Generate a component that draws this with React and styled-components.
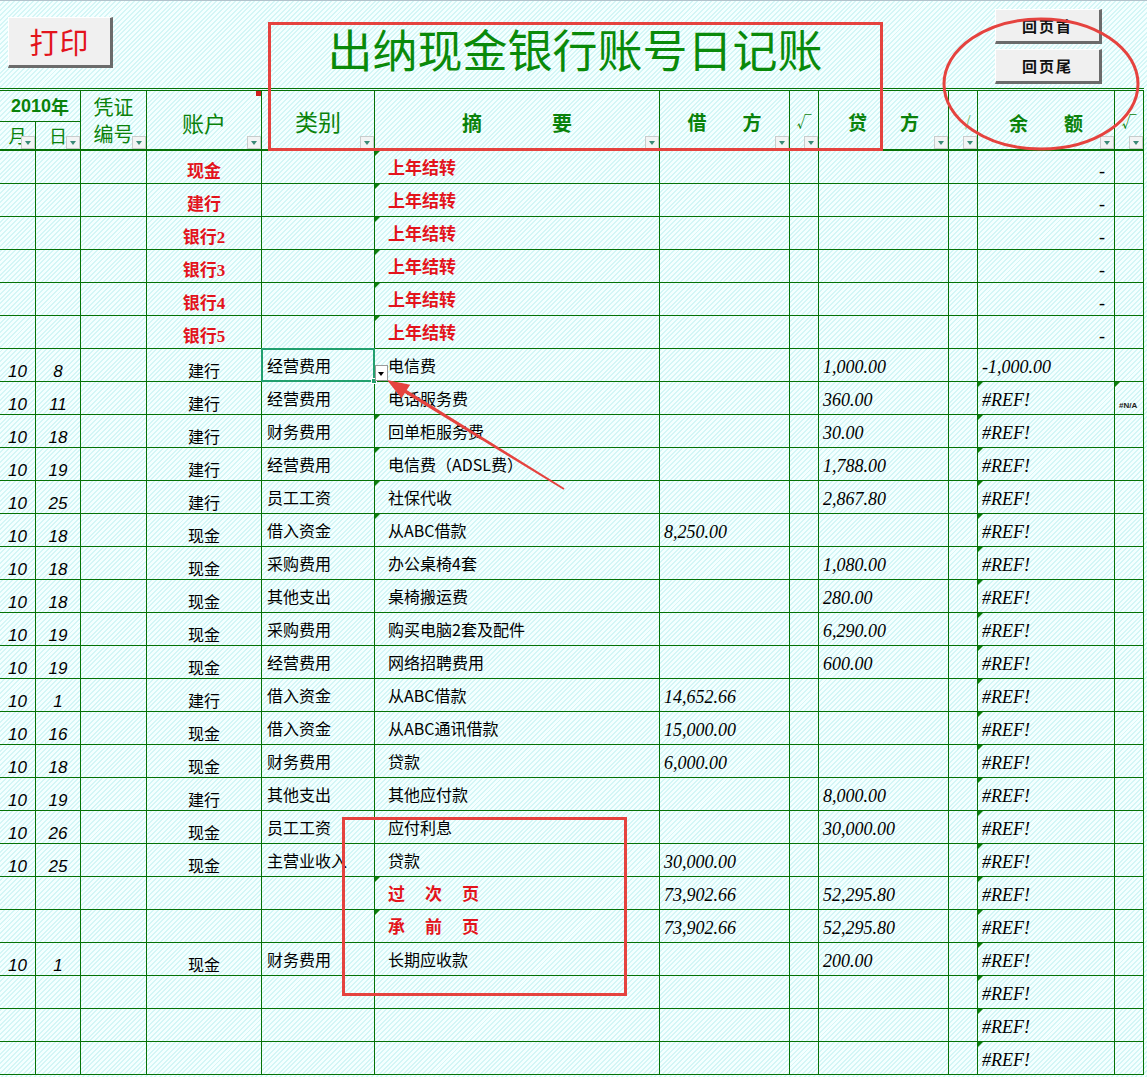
import React from 'react';
import styled, { createGlobalStyle, css } from 'styled-components';

const LINE = '#067206';
const HEAD = '#0a820a';
const RED = '#e3141c';
const CJK = '"Noto Sans CJK SC", "Noto Sans", sans-serif';
const SERIF = '"Liberation Serif", "Noto Sans CJK SC", serif';
const SANS = '"Liberation Sans", "Noto Sans CJK SC", sans-serif';
const COLS = '36px 45px 66px 115px 113px 285px 130px 29px 130px 29px 137px 29px';

const Global = createGlobalStyle`
  *, *::before, *::after { box-sizing: border-box; }
  html, body { margin: 0; padding: 0; background: #e6fcfc; }
  body { font-family: ${CJK}; }
`;

const Page = styled.div`
  position: relative;
  width: 1147px;
  height: 1077px;
  overflow: hidden;
  background: repeating-linear-gradient(135deg, #d4f6f6 0 1.4px, #f4ffff 1.4px 3.4px);
`;

const TopBar = styled.div`
  display: grid;
  grid-template-columns: 268px 614px 1fr;
  height: 88px;
  border-top: 1px solid #b2c3cc;
`;

const PrintButton = styled.button`
  align-self: start;
  margin: 16px 0 0 8px;
  width: 105px;
  height: 51px;
  padding: 0;
  background: #f0f0f0;
  border: none;
  border-top: 1px solid #ffffff;
  border-left: 1px solid #ffffff;
  border-right: 3px solid #6b6b6b;
  border-bottom: 3px solid #6b6b6b;
  color: ${RED};
  font-family: ${CJK};
  font-size: 29px;
  line-height: 1;
  letter-spacing: 1px;
`;

const Title = styled.h1`
  margin: 20px 0 0;
  align-self: start;
  text-align: center;
  font-family: ${CJK};
  font-weight: 400;
  font-size: 45px;
  line-height: 56px;
  color: #0a8a0a;
`;

const NavGroup = styled.div`
  display: flex;
  flex-direction: column;
  gap: 5px;
  padding: 8px 0 0 113px;
`;

const NavButton = styled.button`
  width: 107px;
  height: 35px;
  padding: 0;
  background: #f0f0f0;
  border: none;
  border-top: 1px solid #ffffff;
  border-left: 1px solid #ffffff;
  border-right: 3px solid #6b6b6b;
  border-bottom: 3px solid #6b6b6b;
  color: #111;
  font-family: ${CJK};
  font-weight: 700;
  font-size: 15px;
  letter-spacing: 2px;
`;

const Sheet = styled.div`
  width: 1144px;
`;

const Header = styled.div`
  display: grid;
  grid-template-columns: ${COLS};
  grid-template-rows: 31px 27px;
  border-top: 3px double ${LINE};
  border-bottom: 2px solid ${LINE};
`;

const HeadCell = styled.div`
  position: relative;
  grid-column: ${p => p.$col};
  grid-row: ${p => p.$row || '1 / span 2'};
  display: flex;
  flex-direction: ${p => (p.$stack ? 'column' : 'row')};
  align-items: center;
  justify-content: center;
  gap: ${p => p.$gap || 0}px;
  border-right: 1px solid ${LINE};
  border-bottom: ${p => (p.$split ? `1px solid ${LINE}` : 'none')};
  color: ${HEAD};
  font-family: ${CJK};
  font-size: ${p => p.$size || 20}px;
  font-weight: ${p => (p.$bold ? 700 : 400)};
  line-height: ${p => (p.$stack ? '27px' : '1.2')};
  padding-top: ${p => p.$pt || 0}px;
  ${p =>
    p.$comment &&
    css`
      &::before {
        content: '';
        position: absolute;
        top: 0;
        right: 0;
        border-style: solid;
        border-width: 5px 5px 0 0;
        border-color: #d02020 #d02020 transparent transparent;
      }
    `}
`;

const YearNum = styled.span`
  font-family: ${SANS};
  font-weight: 700;
`;

const FaintMark = styled.span`
  color: #7fbf7f;
  margin-left: 10px;
`;

const Filter = styled.span`
  position: absolute;
  right: 0;
  bottom: 0;
  width: 14px;
  height: 13px;
  background: #f2f4f4;
  border: 1px solid #c8cccc;
  &::after {
    content: '';
    position: absolute;
    left: 3px;
    top: 4px;
    border-style: solid;
    border-width: 4px 3.5px 0 3.5px;
    border-color: #3b8a76 transparent transparent transparent;
  }
`;

const Row = styled.div`
  display: grid;
  grid-template-columns: ${COLS};
  height: 33px;
  border-bottom: 1px solid ${LINE};
`;

const Cell = styled.div`
  position: relative;
  display: flex;
  align-items: center;
  min-width: 0;
  white-space: nowrap;
  border-right: 1px solid ${LINE};
  color: #000;
  font-family: ${CJK};
  font-size: 16px;
  line-height: 20px;
  ${p =>
    p.$flag &&
    css`
      &::before {
        content: '';
        position: absolute;
        left: 0;
        top: 0;
        border-style: solid;
        border-width: 5px 5px 0 0;
        border-color: #0d7d0d transparent transparent transparent;
      }
    `}
`;

const DateCell = styled(Cell)`
  justify-content: center;
  align-items: flex-end;
  padding-bottom: 0;
  font-family: ${SANS};
  font-style: italic;
  font-size: 17px;
  line-height: 18px;
`;

const AcctCell = styled(Cell)`
  justify-content: center;
  align-items: flex-end;
  padding-bottom: 1px;
  ${p =>
    p.$red &&
    css`
      color: ${RED};
      font-family: ${SERIF};
      font-weight: 700;
      font-size: 17px;
    `}
`;

const CatCell = styled(Cell)`
  padding-left: 5px;
  ${p =>
    p.$selected &&
    css`
      z-index: 2;
      &::after {
        content: '';
        position: absolute;
        top: -1px;
        left: -1px;
        right: -1px;
        bottom: -1px;
        border: 2px solid #22a06e;
      }
    `}
`;

const FillHandle = styled.span`
  position: absolute;
  right: -3px;
  bottom: -3px;
  width: 6px;
  height: 6px;
  background: #22a06e;
  border: 1px solid #ffffff;
  z-index: 3;
`;

const DropButton = styled.span`
  position: absolute;
  left: calc(100% + 1px);
  top: 16px;
  width: 13px;
  height: 16px;
  background: #ffffff;
  border: 1px solid #9a9a9a;
  z-index: 3;
  &::after {
    content: '';
    position: absolute;
    left: 2px;
    top: 6px;
    border-style: solid;
    border-width: 4px 3.5px 0 3.5px;
    border-color: #000 transparent transparent transparent;
  }
`;

const DescCell = styled(Cell)`
  padding-left: 13px;
  gap: ${p => p.$gap || 0}px;
  ${p =>
    p.$red &&
    css`
      color: ${RED};
      font-weight: 700;
      font-size: 17px;
    `}
`;

const AmountCell = styled(Cell)`
  padding-left: 4px;
  padding-top: 3px;
  font-family: ${SERIF};
  font-style: italic;
  font-size: 18px;
`;

const TickCell = styled(Cell)``;

const BalCell = styled(AmountCell)`
  ${p =>
    p.$dash &&
    css`
      justify-content: flex-end;
      padding-right: 9px;
      padding-top: 8px;
      font-style: normal;
    `}
`;

const LastCell = styled(Cell)`
  align-items: flex-end;
  padding: 0 0 3px 4px;
  font-family: ${SANS};
  font-weight: 700;
  font-size: 8px;
  line-height: 10px;
  color: #222;
`;

const Annotations = styled.svg`
  position: absolute;
  left: 0;
  top: 0;
  pointer-events: none;
`;

const carry = ['现金', '建行', '银行2', '银行3', '银行4', '银行5'].map(a => ({
  acct: a,
  red: true,
  desc: '上年结转',
  descRed: true,
  flagDesc: true,
  dash: true,
}));

const e = (m, d, acct, cat, desc, debit, credit, bal = '#REF!') => ({ m, d, acct, cat, desc, debit, credit, bal });

const entries = [
  { ...e('10', '8', '建行', '经营费用', '电信费', '', '1,000.00', '-1,000.00'), selected: true },
  { ...e('10', '11', '建行', '经营费用', '电话服务费', '', '360.00'), na: true },
  { ...e('10', '18', '建行', '财务费用', '回单柜服务费', '', '30.00'), flagDesc: true },
  { ...e('10', '19', '建行', '经营费用', '电信费（ADSL费）', '', '1,788.00'), flagDesc: true },
  { ...e('10', '25', '建行', '员工工资', '社保代收', '', '2,867.80'), flagDesc: true },
  { ...e('10', '18', '现金', '借入资金', '从ABC借款', '8,250.00', ''), flagDesc: true },
  e('10', '18', '现金', '采购费用', '办公桌椅4套', '', '1,080.00'),
  e('10', '18', '现金', '其他支出', '桌椅搬运费', '', '280.00'),
  e('10', '19', '现金', '采购费用', '购买电脑2套及配件', '', '6,290.00'),
  e('10', '19', '现金', '经营费用', '网络招聘费用', '', '600.00'),
  e('10', '1', '建行', '借入资金', '从ABC借款', '14,652.66', ''),
  e('10', '16', '现金', '借入资金', '从ABC通讯借款', '15,000.00', ''),
  e('10', '18', '现金', '财务费用', '贷款', '6,000.00', ''),
  e('10', '19', '建行', '其他支出', '其他应付款', '', '8,000.00'),
  e('10', '26', '现金', '员工工资', '应付利息', '', '30,000.00'),
  e('10', '25', '现金', '主营业收入', '贷款', '30,000.00', ''),
  { spaced: ['过', '次', '页'], descRed: true, flagDesc: true, debit: '73,902.66', credit: '52,295.80', bal: '#REF!' },
  { spaced: ['承', '前', '页'], descRed: true, flagDesc: true, debit: '73,902.66', credit: '52,295.80', bal: '#REF!' },
  e('10', '1', '现金', '财务费用', '长期应收款', '', '200.00'),
  { bal: '#REF!' },
  { bal: '#REF!' },
  { bal: '#REF!' },
];

const rows = [...carry, ...entries];

function SheetRow({ r }) {
  const balFlag = !!r.bal && r.bal !== '-1,000.00';
  return (
    <Row>
      <DateCell>{r.m}</DateCell>
      <DateCell>{r.d}</DateCell>
      <Cell />
      <AcctCell $red={r.red}>{r.acct}</AcctCell>
      <CatCell $selected={r.selected}>
        {r.cat}
        {r.selected && <FillHandle />}
        {r.selected && <DropButton />}
      </CatCell>
      <DescCell $red={r.descRed} $flag={r.flagDesc} $gap={r.spaced ? 20 : 0}>
        {r.spaced ? r.spaced.map(ch => <span key={ch}>{ch}</span>) : r.desc}
      </DescCell>
      <AmountCell>{r.debit}</AmountCell>
      <TickCell />
      <AmountCell>{r.credit}</AmountCell>
      <TickCell />
      <BalCell $dash={r.dash} $flag={balFlag}>{r.dash ? '-' : r.bal}</BalCell>
      <LastCell $flag={r.na}>{r.na ? '#N/A' : ''}</LastCell>
    </Row>
  );
}

export default function App() {
  return (
    <>
      <Global />
      <Page>
        <TopBar>
          <div>
            <PrintButton>打印</PrintButton>
          </div>
          <Title>出纳现金银行账号日记账</Title>
          <NavGroup>
            <NavButton>回页首</NavButton>
            <NavButton>回页尾</NavButton>
          </NavGroup>
        </TopBar>
        <Sheet>
          <Header>
            <HeadCell $col="1 / span 2" $row="1" $split $size={18} $bold $pt={2}>
              <YearNum>2010</YearNum>年
            </HeadCell>
            <HeadCell $col="1" $row="2" $size={18}>
              月<Filter />
            </HeadCell>
            <HeadCell $col="2" $row="2" $size={18}>
              日<Filter />
            </HeadCell>
            <HeadCell $col="3" $stack $size={20}>
              <span>凭证</span>
              <span>编号</span>
              <Filter />
            </HeadCell>
            <HeadCell $col="4" $size={22} $comment $pt={4}>
              账户<Filter />
            </HeadCell>
            <HeadCell $col="5" $size={23} $pt={4}>
              类别<Filter />
            </HeadCell>
            <HeadCell $col="6" $size={20} $bold $gap={70} $pt={6}>
              <span>摘</span>
              <span>要</span>
              <Filter />
            </HeadCell>
            <HeadCell $col="7" $size={19} $bold $gap={36} $pt={4}>
              <span>借</span>
              <span>方</span>
              <Filter />
            </HeadCell>
            <HeadCell $col="8" $size={15} $pt={2}>
              √<Filter />
            </HeadCell>
            <HeadCell $col="9" $size={19} $bold $gap={33} $pt={4}>
              <span>贷</span>
              <span>方</span>
              <Filter />
            </HeadCell>
            <HeadCell $col="10" $size={15} $pt={2}>
              <FaintMark>/</FaintMark>
              <Filter />
            </HeadCell>
            <HeadCell $col="11" $size={19} $bold $gap={36} $pt={6}>
              <span>余</span>
              <span>额</span>
              <Filter />
            </HeadCell>
            <HeadCell $col="12" $size={15} $pt={2}>
              √<Filter />
            </HeadCell>
          </Header>
          {rows.map((r, i) => (
            <SheetRow key={i} r={r} />
          ))}
        </Sheet>
        <Annotations width="1147" height="1077" viewBox="0 0 1147 1077">
          <g fill="none" stroke="#e5433f" strokeWidth="3">
            <rect x="269.5" y="23.5" width="612" height="126" />
            <ellipse cx="1041" cy="84" rx="97" ry="65" />
            <rect x="343.5" y="818.5" width="282" height="176" />
          </g>
          <polygon
            fill="#e5433f"
            points="564.5,488.2 406.7,390 410.2,384.8 387,380 401.4,398.2 404.9,393 563.5,489.8"
          />
        </Annotations>
      </Page>
    </>
  );
}
